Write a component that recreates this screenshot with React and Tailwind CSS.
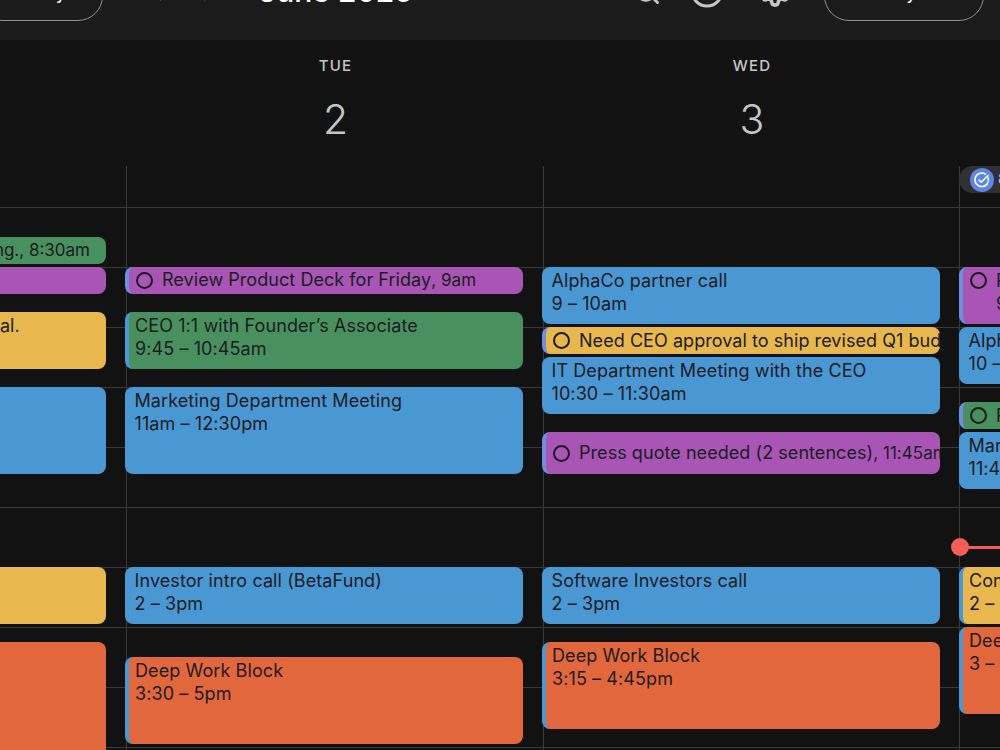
import React from 'react'
import { Search, CircleHelp, Settings, ChevronLeft, ChevronRight } from 'lucide-react'

const font = { fontFamily: 'Inter, sans-serif' }

const Ring = () => (
  <span className="w-[17px] h-[17px] shrink-0 rounded-full border-2 border-[#1c1b1f] mr-[9px]" />
)

// title + time card
const Card = ({ title, time, className }) => (
  <div className={`shrink-0 rounded-lg overflow-hidden pl-[9.5px] pt-[2px] text-[18px] tracking-[0.005em] leading-[23px] text-[#1c1b1f] whitespace-nowrap ${className}`}>
    <div>{title}</div>
    <div>{time}</div>
  </div>
)

// one line task with ring
const Task = ({ title, time, className }) => (
  <div className={`shrink-0 rounded-lg overflow-hidden flex items-center pl-[7px] text-[18px] tracking-[0.003em] text-[#1c1b1f] whitespace-nowrap ${className}`}>
    <Ring />
    <span className="-mt-px">{title}{time && <span className="text-[17px]">, {time}</span>}</span>
  </div>
)

const App = () => {
  return (
    <div className="w-[1000px] h-[750px] overflow-hidden bg-[#121212]" style={font}>
      <div className="h-10 bg-[#1b1b1b] flex items-end overflow-hidden">
        <div className="flex items-center w-full h-10 relative">
          <div className="absolute left-[-23px] bottom-[19px] w-[126px] h-[50px] rounded-full border border-[#8e918f] flex items-center justify-center pb-2 text-white text-[18px]">Today</div>
          <ChevronLeft className="absolute left-[143px] bottom-[34px] text-[#c4c7c5]" size={28} />
          <ChevronRight className="absolute left-[194px] bottom-[34px] text-[#c4c7c5]" size={28} />
          <div className="absolute left-[259px] bottom-[33px] text-white font-medium text-[30px] leading-8 whitespace-nowrap">June 2025</div>
          <Search className="absolute left-[633px] bottom-[34px] text-[#c4c7c5]" size={28} strokeWidth={2.5} />
          <CircleHelp className="absolute left-[689px] bottom-[31px] text-[#c4c7c5]" size={36} strokeWidth={2} />
          <Settings className="absolute left-[758px] bottom-[32px] text-[#c4c7c5]" size={34} strokeWidth={2.5} />
          <div className="absolute left-[824px] bottom-[19px] w-[160px] h-[50px] rounded-full border border-[#8e918f] flex items-center justify-center pb-2 pr-2 text-white text-[18px]">Day</div>
        </div>
      </div>

      <div className="grid grid-cols-[126px_417px_416px_41px] h-[126px] text-[#c4c7c5]">
        <div />
        {[['TUE', '2'], ['WED', '3']].map(([d, n]) => (
          <div key={d} className="flex flex-col items-center pt-[17px] pl-[2px]">
            <div className="text-[15px] leading-[18px] font-medium tracking-[0.08em]">{d}</div>
            <div className="text-[41px] font-[350] leading-[50px] mt-[19px]">{n}</div>
          </div>
        ))}
        <div />
      </div>

      <div className="grid grid-cols-[126px_417px_416px_41px] h-[584px] bg-[linear-gradient(#3a3a3a_1px,transparent_1px)] bg-[length:100%_60px] bg-[position:0_41px]">
        <div className="flex flex-col pt-[71px]">
          <div className="shrink-0 w-[106px] h-[27px] rounded-r-lg bg-[#48915e] text-[17px] leading-[27px] text-[#1c1b1f] flex justify-end pr-4 whitespace-nowrap overflow-hidden">
            <span className="shrink-0">ng., 8:30am</span>
          </div>
          <div className="shrink-0 w-[106px] h-[27px] mt-[3px] rounded-r-lg bg-[#a855b5]" />
          <div className="shrink-0 w-[106px] h-[57px] mt-[18px] rounded-r-lg bg-[#e8b84e] text-[18px] leading-[23px] pt-[2px] pr-[88px] text-right text-[#1c1b1f]">al.</div>
          <div className="shrink-0 w-[106px] h-[87px] mt-[18px] rounded-r-lg bg-[#4a98d3]" />
          <div className="shrink-0 w-[106px] h-[57px] mt-[93px] rounded-r-lg bg-[#e8b84e]" />
          <div className="shrink-0 w-[106px] h-[120px] mt-[18px] rounded-tr-lg bg-[#e3673c]" />
        </div>

        <div className="flex flex-col pt-[101px] border-l border-[#3a3a3a]">
          <Task className="w-[398px] h-[27px] -ml-[2px] bg-[#a855b5] border-l-4 border-[#6d8fe0]" title="Review Product Deck for Friday" time="9am" />
          <Card className="w-[398px] h-[57px] -ml-[2px] mt-[18px] bg-[#48915e] border-l-4 border-[#4a98d3] !pl-1.5" title="CEO 1:1 with Founder’s Associate" time="9:45 – 10:45am" />
          <Card className="w-[398px] h-[87px] -ml-[2px] mt-[18px] bg-[#4a98d3]" title="Marketing Department Meeting" time="11am – 12:30pm" />
          <Card className="w-[398px] h-[57px] -ml-[2px] mt-[93px] bg-[#4a98d3]" title="Investor intro call (BetaFund)" time="2 – 3pm" />
          <Card className="w-[398px] h-[87px] -ml-[2px] mt-[33px] bg-[#e3673c] border-l-4 border-[#4a98d3] !pl-1.5" title="Deep Work Block" time="3:30 – 5pm" />
        </div>

        <div className="flex flex-col pt-[101px] border-l border-[#3a3a3a]">
          <Card className="w-[398px] h-[57px] -ml-[2px] bg-[#4a98d3]" title="AlphaCo partner call" time="9 – 10am" />
          <Task className="w-[398px] h-[27px] -ml-[2px] mt-[3px] bg-[#e8b84e] border-l-4 border-[#6d8fe0]" title="Need CEO approval to ship revised Q1 budget" />
          <Card className="w-[398px] h-[57px] -ml-[2px] mt-[3px] bg-[#4a98d3]" title="IT Department Meeting with the CEO" time="10:30 – 11:30am" />
          <Task className="w-[398px] h-[42px] -ml-[2px] mt-[18px] pt-px bg-[#a855b5] border-l-4 border-[#6d8fe0]" title="Press quote needed (2 sentences)" time="11:45am" />
          <Card className="w-[398px] h-[57px] -ml-[2px] mt-[93px] bg-[#4a98d3]" title="Software Investors call" time="2 – 3pm" />
          <Card className="w-[398px] h-[87px] -ml-[2px] mt-[18px] bg-[#e3673c] border-l-4 border-[#4a98d3] !pl-1.5" title="Deep Work Block" time="3:15 – 4:45pm" />
        </div>

        <div className="relative flex flex-col border-l border-[#3a3a3a]">
          <div className="shrink-0 h-[27px] w-[60px] -ml-px rounded-l-full bg-[#303134] flex items-center pl-[11px] text-[#a8c7fa] text-[15px] font-medium">
            <span className="w-6 h-6 shrink-0 rounded-full bg-[#5f86e3] flex items-center justify-center">
              <svg viewBox="0 0 24 24" className="w-[18px] h-[18px]" fill="none" stroke="white" strokeWidth="2" strokeLinecap="round" strokeLinejoin="round">
                <path d="M20 8.5A9 9 0 1 1 16.5 4.2" />
                <path d="M8 12l3 3 9-9" />
              </svg>
            </span>
            <span className="ml-1">8</span>
          </div>
          <div className="shrink-0 w-[60px] h-[57px] -ml-px mt-[74px] rounded-l-lg overflow-hidden bg-[#a855b5] border-l-4 border-[#6d8fe0] pl-[7px] pt-[5px] flex text-[18px] tracking-[0.005em] leading-[23px] text-[#1c1b1f] whitespace-nowrap">
            <Ring />
            <div className="-mt-[3px]">
              <div>Review</div>
              <div>9am</div>
            </div>
          </div>
          <Card className="w-[60px] h-[57px] -ml-px mt-[3px] bg-[#4a98d3]" title="AlphaCo" time="10 – 11am" />
          <Task className="w-[60px] h-[27px] -ml-px mt-[18px] bg-[#48915e] border-l-4 border-[#6d8fe0]" title="Review" />
          <Card className="w-[60px] h-[57px] -ml-px mt-[3px] bg-[#4a98d3]" title="Marketing" time="11:45am" />
          <Card className="w-[60px] h-[57px] -ml-px mt-[78px] bg-[#e8b84e] border-l-4 border-[#4a98d3] !pl-1.5" title="Compliance" time="2 – 3pm" />
          <Card className="w-[60px] h-[87px] -ml-px mt-[3px] bg-[#e3673c] border-l-4 border-[#4a98d3] !pl-1.5" title="Deep Work" time="3 – 4:30pm" />
          {/* now line */}
          <div className="absolute left-[-9px] top-[372px] flex items-center w-[60px]">
            <span className="w-[18px] h-[18px] shrink-0 rounded-full bg-[#f55e57]" />
            <span className="h-[3px] grow -ml-px bg-[#f55e57]" />
          </div>
        </div>
      </div>
    </div>
  )
}

export default App
